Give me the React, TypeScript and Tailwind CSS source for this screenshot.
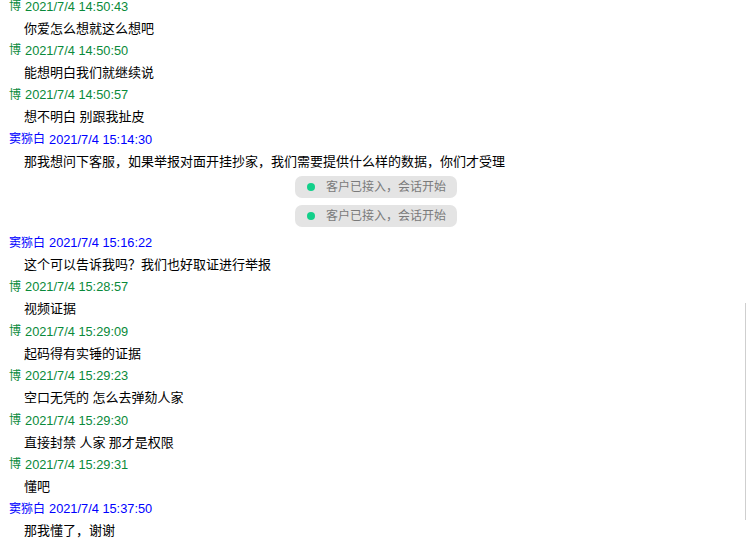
import React from 'react'

type Entry =
  | { kind: 'msg'; who: 'agent' | 'user'; name: string; time: string; text: string }
  | { kind: 'notice'; text: string }

const entries: Entry[] = [
  { kind: 'msg', who: 'agent', name: '博', time: '2021/7/4 14:50:43', text: '你爱怎么想就这么想吧' },
  { kind: 'msg', who: 'agent', name: '博', time: '2021/7/4 14:50:50', text: '能想明白我们就继续说' },
  { kind: 'msg', who: 'agent', name: '博', time: '2021/7/4 14:50:57', text: '想不明白 别跟我扯皮' },
  {
    kind: 'msg',
    who: 'user',
    name: '窦猕白',
    time: '2021/7/4 15:14:30',
    text: '那我想问下客服，如果举报对面开挂抄家，我们需要提供什么样的数据，你们才受理',
  },
  { kind: 'notice', text: '客户已接入，会话开始' },
  { kind: 'notice', text: '客户已接入，会话开始' },
  { kind: 'msg', who: 'user', name: '窦猕白', time: '2021/7/4 15:16:22', text: '这个可以告诉我吗？我们也好取证进行举报' },
  { kind: 'msg', who: 'agent', name: '博', time: '2021/7/4 15:28:57', text: '视频证据' },
  { kind: 'msg', who: 'agent', name: '博', time: '2021/7/4 15:29:09', text: '起码得有实锤的证据' },
  { kind: 'msg', who: 'agent', name: '博', time: '2021/7/4 15:29:23', text: '空口无凭的 怎么去弹劾人家' },
  { kind: 'msg', who: 'agent', name: '博', time: '2021/7/4 15:29:30', text: '直接封禁 人家 那才是权限' },
  { kind: 'msg', who: 'agent', name: '博', time: '2021/7/4 15:29:31', text: '懂吧' },
  { kind: 'msg', who: 'user', name: '窦猕白', time: '2021/7/4 15:37:50', text: '那我懂了，谢谢' },
]

export default function App() {
  return (
    <div
      className="relative h-[543px] w-[746px] overflow-hidden bg-white text-[13px] text-black"
      style={{ fontFamily: '"Noto Sans", "Noto Sans CJK SC", sans-serif' }}
    >
      <div className="mt-[-5px] flex flex-col">
        {entries.map((e, i) => {
          if (e.kind === 'notice') {
            const first = entries[i - 1]?.kind !== 'notice'
            return (
              <div key={i} className={`flex justify-center ${first ? 'pt-[3px] pb-[7px]' : 'pb-[5px]'}`}>
                <div className="ml-[6px] flex h-[22px] w-[162px] items-center rounded-[7px] bg-[#e4e4e4] pl-[12px] text-[12px] text-[#7a7a7a]">
                  <span className="mr-[11px] h-[8px] w-[8px] rounded-full bg-[#12d08a]" />
                  {e.text}
                </div>
              </div>
            )
          }
          return (
            <div key={i}>
              <div
                className={`flex h-[22.2px] items-center pl-[9px] text-[12px] ${
                  e.who === 'agent' ? 'text-[#0a8a3a]' : 'text-[#0000ff]'
                }`}
                style={{ fontFamily: '"Liberation Sans", "Noto Sans CJK SC", sans-serif' }}
              >
                {e.name}
                <span className="ml-[4px] text-[12.8px]">{e.time}</span>
              </div>
              <div className="flex h-[22.2px] items-center pl-[24px]">{e.text}</div>
            </div>
          )
        })}
      </div>
      <div className="absolute right-0 top-[303px] h-[217px] w-px bg-[#cfcfcf]" />
    </div>
  )
}
